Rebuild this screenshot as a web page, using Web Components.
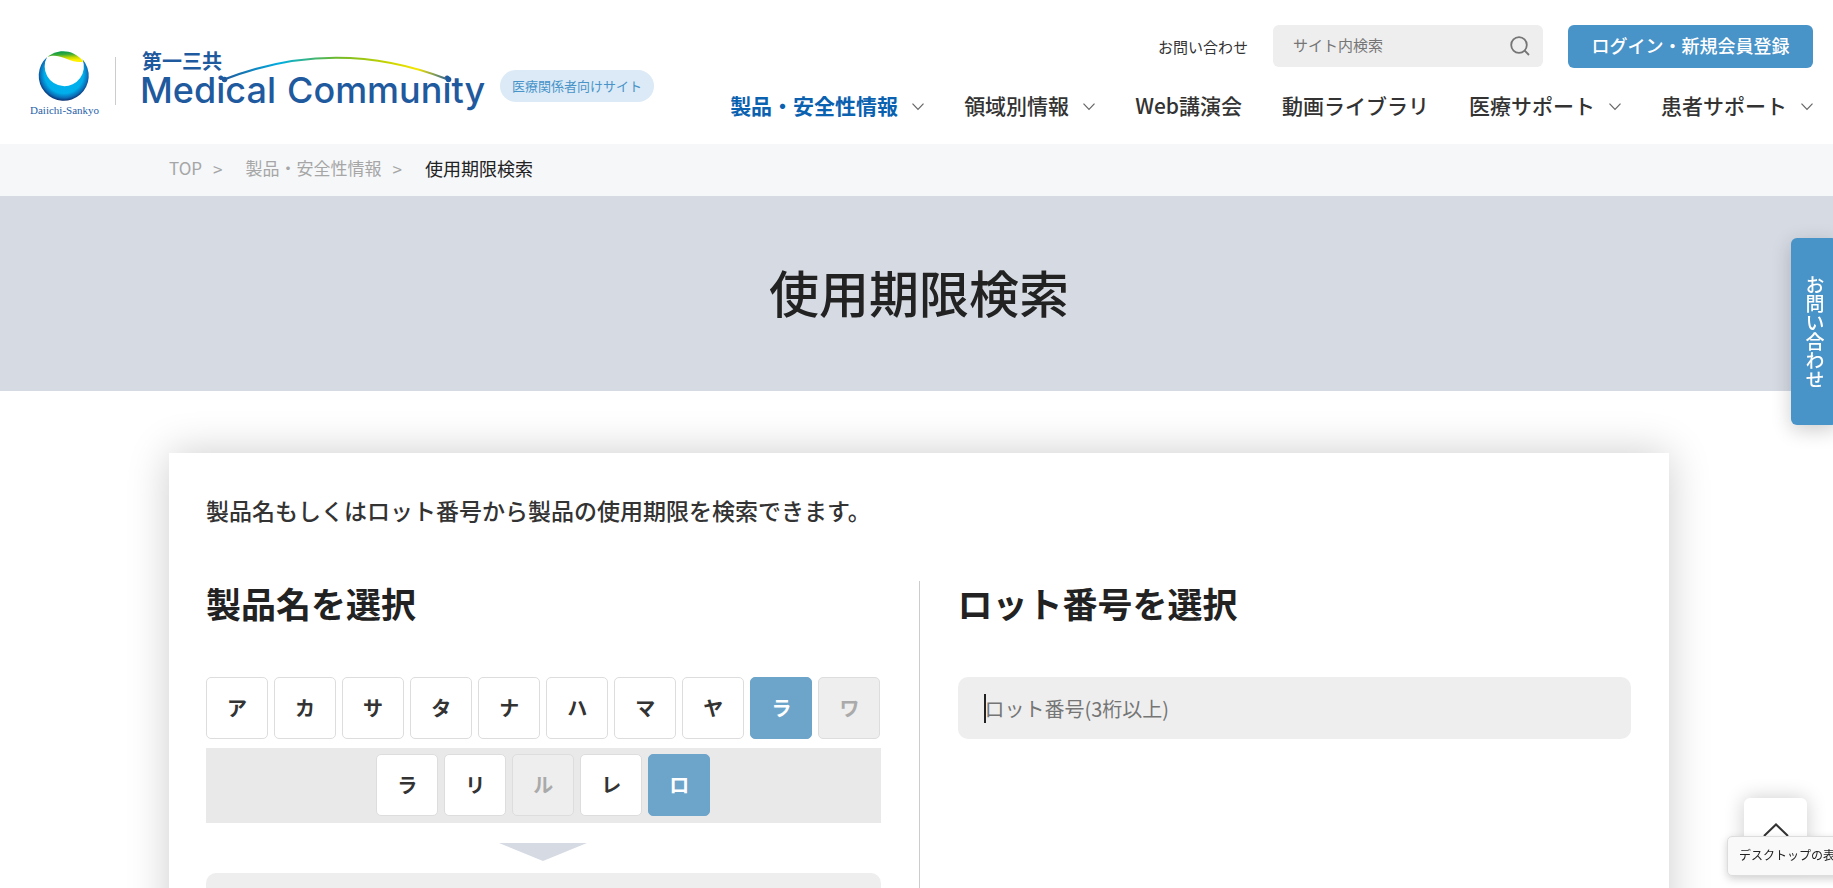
<!DOCTYPE html>
<html lang="ja">
<head>
<meta charset="utf-8">
<meta name="viewport" content="width=device-width, initial-scale=1">
<title>使用期限検索 | Medical Community</title>
<style>
  :root {
    --blue: #4893c8;
    --ink: #222;
    --gutter-left: 169px;
    --gutter-right: 164px;
  }
  html { scrollbar-width: none; }
  body {
    margin: 0;
    background: #fff;
    color: #333;
    font-family: "Noto Sans CJK JP", "Noto Sans", sans-serif;
    overflow-x: hidden;
  }
</style>
</head>
<body>
<site-header></site-header>
<bread-crumb></bread-crumb>
<page-hero>使用期限検索</page-hero>
<search-card>
  <span slot="lead">製品名もしくはロット番号から製品の使用期限を検索できます。</span>
  <product-picker slot="product">製品名を選択</product-picker>
  <lot-field slot="lot">ロット番号を選択</lot-field>
</search-card>
<contact-tab>お問い合わせ</contact-tab>
<page-top></page-top>
<desk-tip>デスクトップの表示</desk-tip>

<script>
const define = (name, html) => customElements.define(name, class extends HTMLElement {
  constructor() {
    super();
    this.attachShadow({ mode: 'open' }).innerHTML = html;
  }
});

define('brand-logo', `
  <style>
    :host { display: block; flex: none; }
    a { display: block; }
    svg { display: block; }
  </style>
  <a href="#" aria-label="第一三共 Medical Community">
  <svg width="462" height="80" viewBox="28 44 462 80">
    <defs>
      <radialGradient id="ball" gradientUnits="userSpaceOnUse" cx="64" cy="74" r="27">
        <stop offset="0" stop-color="#00b5f0"/><stop offset=".72" stop-color="#00aeea"/>
        <stop offset=".88" stop-color="#0a6fb8"/><stop offset="1" stop-color="#0a2a6c"/>
      </radialGradient>
      <linearGradient id="leaf" x1=".4" y1="0" x2=".6" y2="1">
        <stop offset="0" stop-color="#00984a"/><stop offset=".3" stop-color="#3aab38"/>
        <stop offset=".6" stop-color="#c8d800"/><stop offset=".85" stop-color="#fff000"/>
      </linearGradient>
      <linearGradient id="arc" gradientUnits="userSpaceOnUse" x1="224" y1="0" x2="449" y2="0">
        <stop offset="0" stop-color="#1f5a9e"/><stop offset=".25" stop-color="#00aee0"/>
        <stop offset=".5" stop-color="#6eb92b"/><stop offset=".72" stop-color="#c4d200"/>
        <stop offset=".86" stop-color="#f5e600"/><stop offset="1" stop-color="#1f5a9e"/>
      </linearGradient>
    </defs>
    <path d="M47.100 57.100A25 25 0 1 0 82.500 59.300A19.600 19.600 0 1 1 47.100 57.100Z" fill="url(#ball)"/>
    <path d="M47.500 57C56 49 73 48 83.500 61.500C79 63 73 61.500 67 59C60 56 53 54.500 47.500 57Z" fill="url(#leaf)"/>
    <text x="30" y="114" font-family="Liberation Serif, serif" font-size="11" fill="#1f62a8">Daiichi-Sankyo</text>
    <path d="M115.500 57V105" stroke="#ccc"/>
    <text x="142" y="69" font-family="Noto Sans CJK JP, sans-serif" font-size="20" font-weight="700" fill="#1f5a9e">第一三共</text>
    <text x="140" y="103" font-family="Inter, sans-serif" font-size="36" font-weight="500" fill="#1f5a9e">Medical</text>
    <text x="287" y="103" font-family="Inter, sans-serif" font-size="36" font-weight="500" fill="#1f5a9e">Community</text>
    <path d="M224 79.500Q336 36 448 79.500" fill="none" stroke="url(#arc)" stroke-width="2.200"/>
    <circle cx="224.500" cy="79.500" r="2.800" fill="#1f5a9e"/>
    <circle cx="448.500" cy="79.500" r="2.800" fill="#1f5a9e"/>
  </svg>
  </a>`);

define('nav-item', `
  <style>
    :host { display: block; }
    a { display: flex; align-items: center; gap: 14px; color: #333; font-size: 21px; line-height: 32px; font-weight: 500; text-decoration: none; white-space: nowrap; }
    :host([current]) a { color: #0a61b0; font-weight: 700; }
    svg { display: none; margin-top: 4px; }
    :host([menu]) svg { display: block; }
  </style>
  <a href="#"><slot></slot><svg width="12" height="8" viewBox="0 0 12 8" fill="none" stroke="#666" stroke-width="1.200"><path d="M.5 .7L6 6.500L11.500 .7"/></svg></a>`);

define('site-search', `
  <style>
    :host { display: block; }
    form { display: flex; align-items: center; width: 270px; height: 42px; box-sizing: border-box; padding: 0 12px 0 20px; background: #eee; border-radius: 6px; }
    input { flex: 1; min-width: 0; border: 0; padding: 0 0 2px; background: none; font: inherit; font-size: 15px; line-height: 24px; outline: 0; }
    input::placeholder { color: #757575; opacity: 1; }
    button { border: 0; padding: 0; background: none; display: block; }
    svg { display: block; }
  </style>
  <form><input type="search" placeholder="サイト内検索" aria-label="サイト内検索">
  <button type="button" aria-label="検索"><svg width="22" height="22" viewBox="0 0 22 22" fill="none" stroke="#757575" stroke-width="1.800"><circle cx="10" cy="10" r="7.800"/><path d="M15.500 15.500L20 20"/></svg></button></form>`);

define('site-header', `
  <style>
    :host { display: flex; justify-content: space-between; height: 144px; box-sizing: border-box; padding: 0 20px 0 28px; }
    .brand { display: flex; align-items: flex-start; gap: 10px; padding-top: 44px; }
    .pill { margin-top: 26px; height: 32px; padding: 0 12px; border-radius: 16px; background: #dbeaf6; color: var(--blue); font-size: 13px; line-height: 31px; white-space: nowrap; }
    .side { display: flex; flex-direction: column; align-items: flex-end; padding-top: 25px; }
    .tools { display: flex; align-items: flex-start; gap: 25px; height: 43px; }
    .tools > a { color: #333; font-size: 15px; line-height: 43px; text-decoration: none; }
    button { height: 43px; width: 245px; border: 0; border-radius: 6px; background: var(--blue); color: #fff; font: inherit; font-size: 18px; font-weight: 500; padding: 0 0 3px; white-space: nowrap; }
    nav { display: flex; gap: 40px; margin-top: 21px; }
  </style>
  <div class="brand"><brand-logo></brand-logo><span class="pill">医療関係者向けサイト</span></div>
  <div class="side">
    <div class="tools"><a href="#">お問い合わせ</a><site-search></site-search><button type="button">ログイン・新規会員登録</button></div>
    <nav>
      <nav-item current menu>製品・安全性情報</nav-item>
      <nav-item menu>領域別情報</nav-item>
      <nav-item>Web講演会</nav-item>
      <nav-item>動画ライブラリ</nav-item>
      <nav-item menu>医療サポート</nav-item>
      <nav-item menu>患者サポート</nav-item>
    </nav>
  </div>`);

define('bread-crumb', `
  <style>
    :host { display: block; background: #f5f7f9; padding: 0 var(--gutter-right) 0 var(--gutter-left); }
    nav { display: flex; align-items: center; height: 52px; box-sizing: border-box; padding-bottom: 4px; font-size: 17px; line-height: 24px; color: #a6a6a6; }
    a { color: inherit; text-decoration: none; }
    i { font-style: normal; margin: 2px 23px 0 11px; }
    b { font-weight: 400; font-size: 18px; color: var(--ink); }
  </style>
  <nav aria-label="パンくず"><a href="#">TOP</a><i>&gt;</i><a href="#">製品・安全性情報</a><i>&gt;</i><b>使用期限検索</b></nav>`);

define('page-hero', `
  <style>
    :host { display: block; background: #d6dae3; padding: 58px var(--gutter-right) 63px var(--gutter-left); }
    h1 { margin: 0; text-align: center; font-size: 50px; line-height: 74px; font-weight: 500; color: var(--ink); }
  </style>
  <h1><slot></slot></h1>`);

define('search-card', `
  <style>
    :host { display: block; margin: 62px var(--gutter-right) 60px var(--gutter-left); padding: 39px 38px 60px 37px; background: #fff; box-shadow: 0 0 40px rgba(0,0,0,.2); }
    p { margin: 0 0 53px; font-size: 23px; line-height: 36px; font-weight: 500; }
    .cols { display: grid; grid-template-columns: 1fr 1fr; min-height: 400px; }
    .a { padding-right: 38px; }
    .b { border-left: 1px solid #ccc; padding-left: 38px; }
  </style>
  <p><slot name="lead"></slot></p>
  <div class="cols"><div class="a"><slot name="product"></slot></div><div class="b"><slot name="lot"></slot></div></div>`);

define('kana-key', `
  <style>
    :host { display: block; }
    button { display: block; width: 100%; height: 62px; border: 1px solid #ddd; border-radius: 5px; background: #fff; color: #333; font: inherit; font-size: 20px; font-weight: 700; padding: 0 0 2px; }
    :host([on]) button { background: #6da4ca; border-color: #6da4ca; color: #fff; }
    :host([off]) button { background: #eee; color: #aaa; }
  </style>
  <button type="button"><slot></slot></button>`);

define('product-picker', `
  <style>
    :host { display: block; }
    h2 { margin: 0 0 52px; font-size: 35px; line-height: 44px; font-weight: 700; color: var(--ink); }
    .row { display: grid; grid-template-columns: repeat(10, 1fr); gap: 6px; }
    .sub { display: flex; justify-content: center; gap: 6px; margin-top: 9px; padding: 6px 0 7px; background: #e9e9e9; }
    .sub kana-key { width: 62px; }
    svg { display: block; margin: 20px auto 12px; }
    select { display: block; width: 100%; height: 62px; border: 0; border-radius: 10px; background: #eee; appearance: none; }
  </style>
  <h2><slot></slot></h2>
  <div class="row">
    <kana-key>ア</kana-key><kana-key>カ</kana-key><kana-key>サ</kana-key><kana-key>タ</kana-key><kana-key>ナ</kana-key><kana-key>ハ</kana-key><kana-key>マ</kana-key><kana-key>ヤ</kana-key><kana-key on>ラ</kana-key><kana-key off>ワ</kana-key>
  </div>
  <div class="sub">
    <kana-key>ラ</kana-key><kana-key>リ</kana-key><kana-key off>ル</kana-key><kana-key>レ</kana-key><kana-key on>ロ</kana-key>
  </div>
  <svg width="88" height="18" viewBox="0 0 88 18"><path d="M0 0H88L44 18Z" fill="#d6dae3"/></svg>
  <select aria-label="製品名"></select>`);

define('lot-field', `
  <style>
    :host { display: block; }
    label { display: block; margin: 0 0 52px; font-size: 35px; line-height: 44px; font-weight: 700; color: var(--ink); }
    .box { position: relative; }
    input { display: block; width: 100%; height: 62px; box-sizing: border-box; border: 0; border-radius: 10px; background: #eee; padding: 0 27px; font: inherit; font-size: 20px; outline: 0; }
    input::placeholder { color: #757575; opacity: 1; }
    .caret { position: absolute; left: 26px; top: 17px; width: 2px; height: 29px; background: #222; }
  </style>
  <label for="lot"><slot></slot></label>
  <div class="box"><input id="lot" type="text" placeholder="ロット番号(3桁以上)"><span class="caret"></span></div>`);

define('contact-tab', `
  <style>
    :host { display: block; position: fixed; right: -5px; top: 238px; }
    a { display: flex; align-items: center; justify-content: center; width: 47px; height: 187px; border-radius: 6px; background: var(--blue); box-shadow: 0 5px 20px rgba(0,0,0,.2); color: #fff; font-size: 19px; line-height: 24px; font-weight: 500; text-decoration: none; writing-mode: vertical-rl; }
  </style>
  <a href="#"><slot></slot></a>`);

define('page-top', `
  <style>
    :host { display: block; position: fixed; right: 26px; bottom: 27px; }
    button { display: flex; align-items: center; justify-content: center; width: 63px; height: 63px; padding: 0; border: 0; border-radius: 6px; background: #fff; box-shadow: 0 0 20px rgba(0,0,0,.2); }
  </style>
  <button type="button" aria-label="ページの先頭へ"><svg width="26" height="14" viewBox="0 0 26 14" fill="none" stroke="#333" stroke-width="2"><path d="M1 13L13 1.500L25 13"/></svg></button>`);

define('desk-tip', `
  <style>
    :host { display: block; position: fixed; left: calc(100% - 106px); bottom: 12px; box-sizing: border-box; width: 130px; height: 40px; padding: 0 11px; border: 1px solid #ddd; border-radius: 5px; background: #f9f9f9; box-shadow: 0 3px 8px rgba(0,0,0,.18); color: #222; font-size: 12px; line-height: 36px; white-space: nowrap; }
  </style>
  <slot></slot>`);
</script>
</body>
</html>
